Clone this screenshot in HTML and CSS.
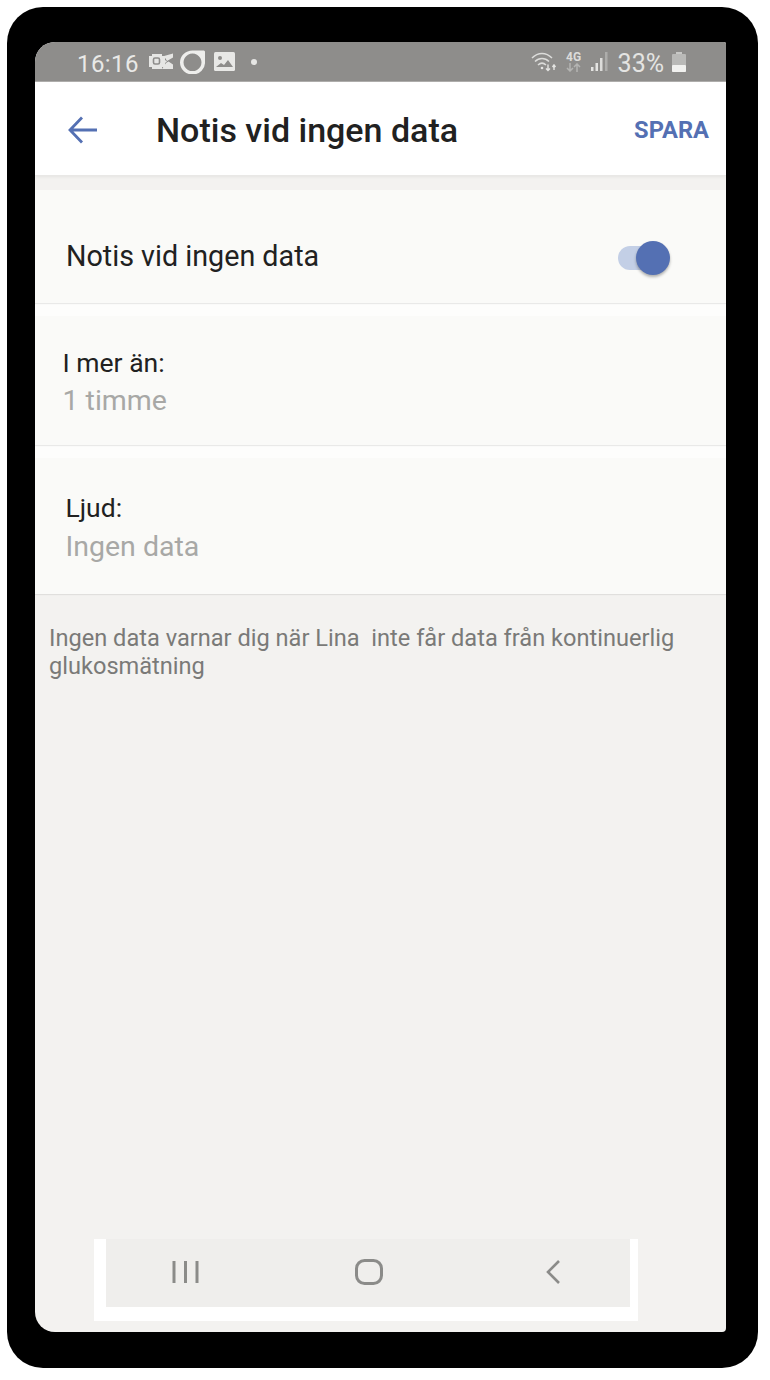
FILE: index.html
```html
<!DOCTYPE html>
<html lang="sv">
<head>
<meta charset="utf-8">
<title>Notis vid ingen data</title>
<link rel="stylesheet" href="styles.css">
</head>
<body>
<div class="phone">
  <main class="screen">
    <div class="status">
      <span class="time">16:16</span>
      <svg class="ic-outlook" width="24" height="17" viewBox="0 0 24 17"><path d="M0 3h3V1h10v2h3v4l2 1.500-2 1.500v4h-3v2H3v-2H0z" fill="#e6e6e4"/><rect x="4.500" y="5" width="6" height="6" rx="1.500" fill="none" stroke="#8e8d8b" stroke-width="1.600"/><path d="M15 3l9-2.500v4L18 8zM17 10l2.500-1.500 4.500 3V16H13z" fill="#e6e6e4"/></svg>
      <svg class="ic-ring" width="25" height="24" viewBox="0 0 25 24"><path fill-rule="evenodd" d="M12.500 0.500H24l1 1v10.500A12.500 12 0 1 1 12.500 0.500zM12.500 3.500a9 8.800 0 1 0 .01 0z" fill="#eeeeec"/></svg>
      <svg class="ic-image" width="21" height="19" viewBox="0 0 21 19"><rect width="21" height="19" rx="1.500" fill="#e8e8e6"/><circle cx="6" cy="6" r="2" fill="#8e8d8b"/><path d="M2 15l5-4 3 2 4-5 5 7z" fill="#8e8d8b"/></svg>
      <span class="dot"></span>
      <span class="status-gap"></span>
      <svg class="ic-wifi" width="26" height="20" viewBox="0 0 26 20" fill="none" stroke="#dcdcda" stroke-width="1.500"><path d="M1 6c6-6 14-6 20 0M4 9.500c4-4 10-4 14 0M7 13c2.500-2.500 5.500-2.500 8 0"/><circle cx="11" cy="16" r="1.300" fill="#e4e4e2" stroke="none"/><path d="M17 12.500v6M15 16.500l2 2 2-2M23 18v-5M21.500 15l1.500-2 1.500 2" stroke="#e4e4e2" stroke-width="1.400"/></svg>
      <span class="net"><b>4G</b><svg width="15" height="9" viewBox="0 0 15 9" fill="none" stroke="#b4b4b2" stroke-width="1.500"><path d="M4 0v8M1 5l3 3 3-3M11 9V1M8 4l3-3 3 3"/></svg></span>
      <svg class="ic-signal" width="17" height="19" viewBox="0 0 17 19"><rect x="0" y="15" width="2.500" height="4" fill="#e4e4e2"/><rect x="4.500" y="11" width="2.500" height="8" fill="#e4e4e2"/><rect x="9" y="6" width="2.500" height="13" fill="#dcdcda"/><rect x="14" y="0" width="2.500" height="19" fill="#adadab"/></svg>
      <span class="pct">33%</span>
      <svg class="ic-batt" width="14" height="20" viewBox="0 0 14 20"><rect x="4" y="0" width="6" height="3" fill="#c8c8c6"/><rect x="0" y="2" width="14" height="18" rx="1" fill="#b9b9b7"/><rect x="0" y="13" width="14" height="7" rx="1" fill="#f1f1ef"/></svg>
    </div>
    <header class="appbar">
      <svg class="back" width="30" height="28" viewBox="0 0 30 28" fill="none" stroke="#5470b3" stroke-width="2.800"><path d="M2 14h27M14 1.500L2 14l12 12.500"/></svg>
      <h1 class="title">Notis vid ingen data</h1>
      <span class="save">SPARA</span>
    </header>
    <section class="card card-toggle">
      <span class="toggle-label">Notis vid ingen data</span>
      <span class="switch"><span class="knob"></span></span>
    </section>
    <div class="group">
      <section class="card card-more">
        <div class="label">I mer än:</div>
        <div class="value">1 timme</div>
      </section>
      <section class="card card-sound">
        <div class="label">Ljud:</div>
        <div class="value">Ingen data</div>
      </section>
    </div>
    <p class="note">Ingen data varnar dig när Lina&nbsp; inte får data från kontinuerlig glukosmätning</p>
    <div class="nav-wrap">
      <nav class="nav">
        <svg width="28" height="24" viewBox="0 0 28 24" fill="none" stroke="#8b8b89" stroke-width="3"><path d="M2 1v22M13.500 1v22M25 1v22"/></svg>
        <svg width="28" height="26" viewBox="0 0 28 26" fill="none" stroke="#8b8b89" stroke-width="3"><rect x="1.500" y="1.500" width="25" height="23" rx="8"/></svg>
        <svg width="24" height="26" viewBox="0 0 24 26" fill="none" stroke="#8b8b89" stroke-width="2.600"><path d="M22 2L11 13l11 11"/></svg>
      </nav>
    </div>
  </main>
</div>
</body>
</html>
```
FILE: styles.css
```css
* { box-sizing: border-box; }
html, body { margin: 0; background: #fff; }
body { padding: 7px 12px 12px 7px; font-family: Roboto, "Liberation Sans", sans-serif; }
.phone {
  width: 751px; height: 1361px; background: #000; border-radius: 36px;
  padding: 35px 32px 36px 28px; display: flex;
}
.screen {
  flex: 1; background: #f3f2f0; overflow: hidden; display: flex; flex-direction: column;
  border-radius: 20px 2px 4px 20px;
}
.status {
  height: 40px; background: #8e8d8b; border-bottom: 1px solid #b0afad;
  display: flex; align-items: center; padding: 0 40px 0 42px; flex: none;
}
.time { font-size: 24px; color: #e9e9e7; letter-spacing: .4px; margin-top: 4px; }
.ic-outlook { margin-left: 10px; }
.ic-ring { margin-left: 7px; }
.ic-image { margin-left: 9px; }
.dot { width: 6px; height: 6px; border-radius: 50%; background: #e6e6e4; margin-left: 16px; }
.status-gap { flex: 1; }
.net { display: flex; flex-direction: column; align-items: center; width: 16px; margin-left: 9px; line-height: 11px; color: #dcdcda; }
.net b { font-size: 12px; font-weight: 700; }
.ic-signal { margin-left: 9px; }
.pct { font-size: 25px; color: #e4e4e2; margin-left: 10px; margin-top: 4px; }
.ic-batt { margin-left: 8px; }
.appbar {
  height: 94px; background: #fff; display: flex; align-items: center; flex: none;
  padding: 3px 17px 0 33px; border-bottom: 1px solid #e9e8e6;
  box-shadow: 0 1px 3px rgba(0,0,0,.06);
}
.title { margin: 0 0 0 58px; font-size: 34px; font-weight: 500; color: #212121; flex: 1; }
.save { font-size: 23.700px; font-weight: 700; color: #5470b3; }
.card { background: #fafaf8; box-shadow: 0 1px 1px rgba(0,0,0,.08); flex: none; }
.card-toggle {
  height: 113px; margin-top: 14px; display: flex; align-items: center; position: relative; z-index: 1;
  justify-content: space-between; padding: 20px 58px 0 31px;
}
.toggle-label { font-size: 28.700px; color: #212121; margin-bottom: 2px; }
.switch { width: 50px; height: 24px; margin-top: 2px; background: #c3cfe6; border-radius: 12px; position: relative; display: block; }
.knob {
  position: absolute; right: -2px; top: -5px; width: 34px; height: 34px; border-radius: 50%;
  background: #5470b3; box-shadow: 0 2px 3px rgba(0,0,0,.3);
}
.group { background: #fdfdfc; padding-top: 13px; flex: none; }
.card-more { height: 129px; padding: 28px 0 0 27.500px; }
.card-more .value { margin-top: 1px; }
.card-sound { height: 136px; margin-top: 13px; padding: 31px 0 0 30.500px; }
.card-sound .value { margin-top: 2px; }
.label { font-size: 26.500px; line-height: 37px; color: #212121; }
.value { font-size: 28.500px; line-height: 37px; color: #a8a8a6; }
.note { margin: 30px 38px 0 14px; font-size: 23.600px; line-height: 28px; color: #7a7a78; }
.nav-wrap {
  margin: auto 88px 11px 59px; background: #fff; height: 82px;
  padding: 0 8px 14px 12px; flex: none;
}
.nav {
  height: 68px; background: #efeeec; display: flex; align-items: center;
  justify-content: space-between; padding: 0 69px 2px 66px;
}
```
